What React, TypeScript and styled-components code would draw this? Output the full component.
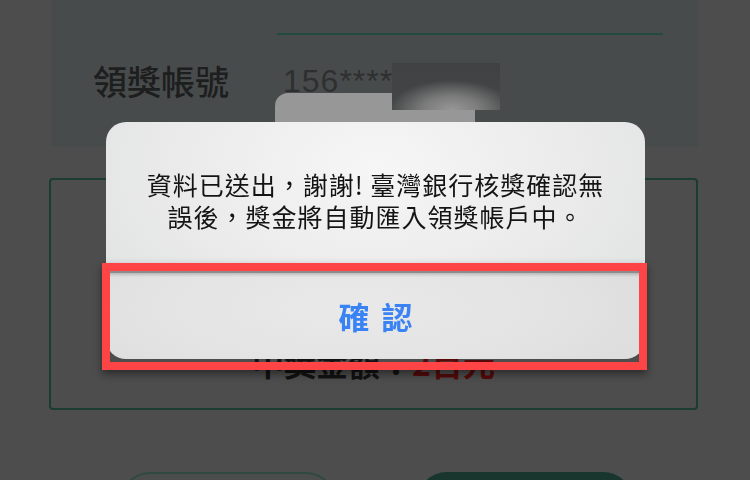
import styled, { createGlobalStyle } from "styled-components"

const GlobalStyle = createGlobalStyle`
    html, body {
        margin: 0;
        padding: 0;
    }
    body {
        width: 750px;
        height: 480px;
        overflow: hidden;
        background: #4d4d4d;
        font-family: "Noto Sans CJK TC", "Noto Sans", sans-serif;
    }
`

const Page = styled.div`
    position: relative;
    width: 750px;
    height: 480px;
    padding: 0 52px 0 49px;
    box-sizing: border-box;
    display: flex;
    flex-direction: column;
    overflow: hidden;

    & > * {
        flex-shrink: 0;
    }
`

const InfoPanel = styled.section`
    height: 147px;
    margin-left: 2px;
    padding-left: 42px;
    background: #484b4c;
    display: flex;
    flex-direction: column;
`

const Underline = styled.div`
    margin: 33px 0 0 184px;
    width: 386px;
    height: 2px;
    background: #234a3e;
`

const InfoRow = styled.div`
    margin-top: 26px;
    display: flex;
    align-items: center;
    gap: 54px;
    height: 40px;
`

const Label = styled.span`
    font-size: 34px;
    font-weight: 500;
    color: #1d1e1e;
    line-height: 40px;
`

const Value = styled.span`
    font-family: "Liberation Sans", Arial, sans-serif;
    font-size: 32px;
    color: #2e3030;
    line-height: 40px;
    letter-spacing: 1px;
`

const KeyTab = styled.div`
    position: absolute;
    left: 275px;
    top: 93px;
    width: 200px;
    height: 60px;
    border-radius: 13px 0 0 0;
    background: #979797;
`

const Redaction = styled.div`
    position: absolute;
    left: 392px;
    top: 63px;
    width: 108px;
    height: 47px;
    background:
        radial-gradient(ellipse 62px 30px at 55% 100%, #979797 0%, #7c7c7c 45%, rgba(67, 69, 70, 0) 100%),
        linear-gradient(#3f4142, #444647);
`

const PrizeCard = styled.section`
    margin-top: 31px;
    height: 232px;
    border: 2px solid #1d3c31;
    border-radius: 4px;
    box-sizing: border-box;
    display: flex;
    flex-direction: column;
    justify-content: flex-end;
    align-items: center;
    padding-bottom: 26px;
`

const Amount = styled.div`
    font-size: 32px;
    font-weight: 700;
    line-height: 40px;
    color: #121212;
`

const Red = styled.span`
    color: #560a0a;
`

const ButtonRow = styled.div`
    margin-top: 62px;
    display: flex;
    justify-content: center;
    gap: 81px;
    padding-left: 5px;
`

const PillButton = styled.div<{ $filled?: boolean }>`
    width: 216px;
    height: 60px;
    border-radius: 30px;
    box-sizing: border-box;
    border: 2px solid ${p => (p.$filled ? "#18362e" : "#2f4a41")};
    background: ${p => (p.$filled ? "#18362e" : "#4b4d4c")};
`

const Overlay = styled.div`
    position: fixed;
    inset: 0;
    display: flex;
    align-items: center;
    justify-content: center;
    padding-left: 1px;
`

const Dialog = styled.div`
    width: 539px;
    height: 237px;
    display: flex;
    flex-direction: column;
`

const Message = styled.div`
    height: 149px;
    box-sizing: border-box;
    padding-top: 46px;
    border-radius: 20px 20px 0 0;
    background: radial-gradient(ellipse 320px 200px at 50% 30%, #f6f6f6 0%, #ebebeb 60%, #e2e3e3 100%);
    text-align: center;
    font-size: 25px;
    line-height: 32px;
    letter-spacing: 1px;
    color: #141414;
`

const ButtonArea = styled.div`
    position: relative;
    flex: 1;
    display: flex;
    align-items: center;
    justify-content: center;
    border-radius: 0 0 20px 20px;
    border-top: 2px solid #8c8c8c;
    box-shadow: inset 0 2px 3px rgba(0, 0, 0, 0.18);
    background: radial-gradient(ellipse 300px 90px at 45% 40%, #e9e9e9 0%, #e3e3e3 70%, #dedede 100%);

    &::after {
        content: "";
        position: absolute;
        top: -10px;
        left: -4px;
        right: -2px;
        bottom: -11px;
        border: 8px solid #fe4444;
        box-shadow: 0 4px 8px rgba(0, 0, 0, 0.45);
        pointer-events: none;
    }
`

const ConfirmText = styled.span`
    font-size: 31px;
    font-weight: 700;
    color: #3a83f5;
    letter-spacing: 12px;
    padding-left: 12px;
    line-height: 40px;
`

const App = () => {
    return (
        <>
            <GlobalStyle />
            <Page>
                <InfoPanel>
                    <Underline />
                    <InfoRow>
                        <Label>領獎帳號</Label>
                        <Value>156****</Value>
                    </InfoRow>
                </InfoPanel>
                <PrizeCard>
                    <Amount>
                        中獎金額：<Red>2百元</Red>
                    </Amount>
                </PrizeCard>
                <ButtonRow>
                    <PillButton />
                    <PillButton $filled />
                </ButtonRow>
                <KeyTab />
                <Redaction />
            </Page>
            <Overlay>
                <Dialog>
                    <Message>
                        資料已送出，謝謝! 臺灣銀行核獎確認無
                        <br />
                        誤後，獎金將自動匯入領獎帳戶中。
                    </Message>
                    <ButtonArea>
                        <ConfirmText>確認</ConfirmText>
                    </ButtonArea>
                </Dialog>
            </Overlay>
        </>
    )
}

export default App
